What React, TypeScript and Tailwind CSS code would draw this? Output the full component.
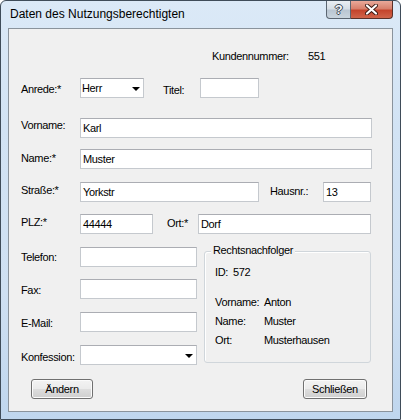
import type { ReactNode } from 'react';

// Eingabefeld im Vista-Stil (nur Anzeige)
function Field({ w, value }: { w: string; value?: string }) {
  return (
    <div
      className={`${w} h-[20px] shrink-0 border border-[#c5c9ce] border-t-[#abadb3] bg-white pl-[2px] leading-[18px] text-black`}
    >
      {value}
    </div>
  );
}

function Combo({ w, value }: { w: string; value?: string }) {
  return (
    <div
      className={`${w} h-[20px] shrink-0 flex items-center justify-between border border-[#c5c9ce] border-t-[#abadb3] bg-white pl-[1px] pr-[3px] leading-[18px]`}
    >
      <span>{value}</span>
      <svg width="8" height="4" viewBox="0 0 8 4" className="mt-[1px]">
        <path d="M0 0 H8 L4 4 Z" fill="#000" />
      </svg>
    </div>
  );
}

function Label({ w, off, children }: { w: string; off: string; children: ReactNode }) {
  return <div className={`${w} shrink-0 relative ${off} leading-[20px]`}>{children}</div>;
}

function Btn({ w, children }: { w: string; children: ReactNode }) {
  return (
    <div
      className={`${w} h-[20px] flex items-center justify-center rounded-[3px] border border-[#707070] bg-[linear-gradient(to_bottom,#f3f3f3_0%,#ebebeb_48%,#dddddd_52%,#cfcfcf_100%)] shadow-[inset_0_0_0_1px_#fbfbfb] leading-[18px]`}
    >
      {children}
    </div>
  );
}

export default function App() {
  return (
    <div className="w-[401px] h-[420px] flex flex-col overflow-hidden rounded-t-[6px] border border-[#3f4c59] bg-[linear-gradient(to_bottom,#dbe9f7_0%,#d2e3f4_30%,#cfe0f2_70%,#bfd6ee_100%)] font-['Liberation_Sans',Arial,sans-serif] text-[11px] tracking-[-0.35px] text-black">
      {/* Titelleiste */}
      <div className="h-[27px] shrink-0 flex items-start justify-between">
        <div className="pl-[9px] text-[12px] tracking-normal leading-[27px] text-black">
          Daten des Nutzungsberechtigten
        </div>
        <div className="mr-[7px] flex">
          <div className="w-[25px] h-[18px] flex items-center justify-center rounded-bl-[4px] border border-t-0 border-[#5b6571] bg-[linear-gradient(to_bottom,#e9eef3_0%,#d6dee6_45%,#bac6d2_55%,#c9d4de_100%)]">
            <span className="text-[13px] font-bold text-[#f5f7fa] leading-none [text-shadow:1px_0_0_#3a4652,-1px_0_0_#3a4652,0_1px_0_#3a4652,0_-1px_0_#3a4652]">?</span>
          </div>
          <div className="w-[42px] h-[18px] flex items-center justify-center rounded-br-[4px] border border-l-0 border-t-0 border-[#5b3028] bg-[linear-gradient(to_bottom,#e9a99a_0%,#d7806c_45%,#c4442c_55%,#d0644a_100%)]">
            <svg width="13" height="11" viewBox="0 0 13 11">
              <path d="M2 1.5 L11 9.5 M11 1.5 L2 9.5" stroke="#3b1a14" strokeWidth="4" strokeLinecap="round" />
              <path d="M2 1.5 L11 9.5 M11 1.5 L2 9.5" stroke="#ffffff" strokeWidth="2.2" strokeLinecap="round" />
            </svg>
          </div>
        </div>
      </div>

      {/* Inhalt */}
      <div className="mx-[7px] mb-[7px] flex-1 flex flex-col border border-[#8a939c] bg-[#f0f0f0]">
        <div className="mt-[17px] h-[20px] flex pl-[203px] leading-[20px]">
          <span className="w-[96px]">Kundennummer:</span>
          <span>551</span>
        </div>

        <div className="mt-[12px] flex pl-[12px]">
          <Label w="w-[59px]" off="top-[1px]">Anrede:*</Label>
          <Combo w="w-[64px]" value="Herr" />
          <Label w="w-[37px] ml-[19px]" off="top-[2px]">Titel:</Label>
          <Field w="w-[59px]" />
        </div>

        <div className="mt-[20px] flex pl-[12px]">
          <Label w="w-[59px]" off="-top-[3px]">Vorname:</Label>
          <Field w="w-[292px]" value="Karl" />
        </div>

        <div className="mt-[11px] flex pl-[12px]">
          <Label w="w-[59px]" off="-top-[1px]">Name:*</Label>
          <Field w="w-[292px]" value="Muster" />
        </div>

        <div className="mt-[13px] flex pl-[12px]">
          <Label w="w-[59px]" off="-top-[2px]">Straße:*</Label>
          <Field w="w-[179px]" value="Yorkstr" />
          <Label w="w-[53px] ml-[11px]" off="-top-[1px]">Hausnr.:</Label>
          <Field w="w-[48px]" value="13" />
        </div>

        <div className="mt-[12px] flex pl-[12px]">
          <Label w="w-[59px]" off="-top-[2px]">PLZ:*</Label>
          <Field w="w-[73px]" value="44444" />
          <Label w="w-[31px] ml-[14px]" off="-top-[1px]">Ort:*</Label>
          <Field w="w-[173px]" value="Dorf" />
        </div>

        <div className="mt-[13px] flex items-start pl-[12px]">
          <div className="flex flex-col">
            <div className="flex">
              <Label w="w-[59px]" off="top-0">Telefon:</Label>
              <Field w="w-[117px]" />
            </div>
            <div className="mt-[12px] flex">
              <Label w="w-[59px]" off="top-[1px]">Fax:</Label>
              <Field w="w-[117px]" />
            </div>
            <div className="mt-[13px] flex">
              <Label w="w-[59px]" off="top-[1px]">E-Mail:</Label>
              <Field w="w-[117px]" />
            </div>
            <div className="mt-[13px] flex">
              <Label w="w-[59px]" off="top-[2px]">Konfession:</Label>
              <Combo w="w-[117px]" />
            </div>
          </div>

          <div className="relative ml-[7px] mt-[4px] w-[167px] h-[112px] rounded-[3px] border border-[#d0d6db] shadow-[inset_1px_1px_0_#ffffff] pl-[10px] pt-[11px]">
            <span className="absolute -top-[8px] left-[6px] bg-[#f0f0f0] px-[2px] leading-[13px]">Rechtsnachfolger</span>
            <div className="flex gap-[5px] leading-[19px]">
              <span>ID:</span>
              <span>572</span>
            </div>
            <div className="mt-[11px] flex leading-[19px]">
              <span className="w-[49px]">Vorname:</span>
              <span>Anton</span>
            </div>
            <div className="flex leading-[19px]">
              <span className="w-[49px]">Name:</span>
              <span>Muster</span>
            </div>
            <div className="flex leading-[19px]">
              <span className="w-[49px]">Ort:</span>
              <span>Musterhausen</span>
            </div>
          </div>
        </div>

        <div className="mt-[14px] flex justify-between pl-[22px] pr-[25px]">
          <Btn w="w-[62px]">Ändern</Btn>
          <Btn w="w-[64px]">Schließen</Btn>
        </div>
      </div>
    </div>
  );
}
